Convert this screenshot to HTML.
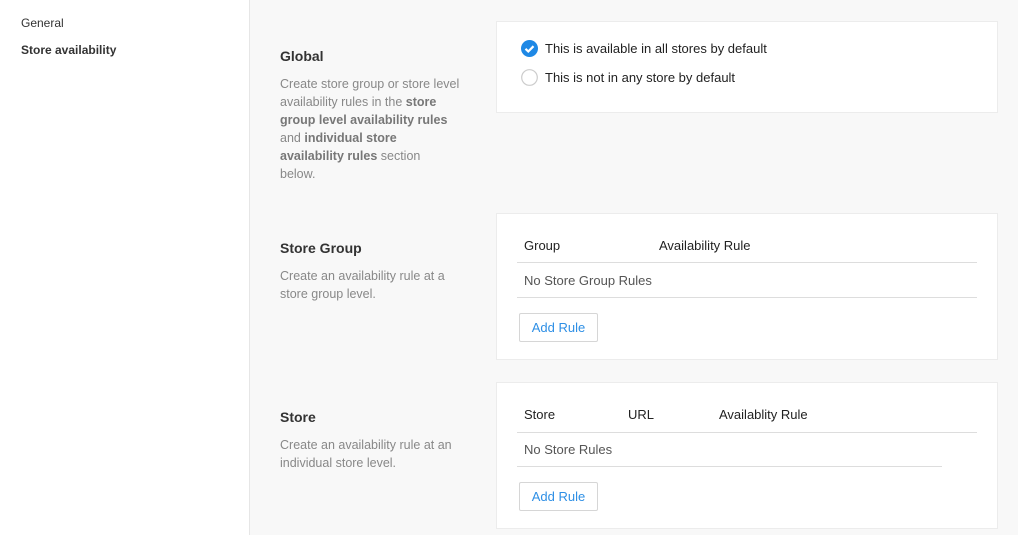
<!DOCTYPE html>
<html><head><meta charset="utf-8"><style>
*{margin:0;padding:0;box-sizing:border-box}
body{width:1018px;height:535px;overflow:hidden;background:#f8f8f8;font-family:"Liberation Sans",sans-serif;position:relative}
.side{position:absolute;left:0;top:0;width:250px;height:535px;background:#fff;border-right:1px solid #e6e6e6}
.side div{position:absolute;left:21px;font-size:12px;color:#333}
.a{position:absolute}
h3{position:absolute;left:280px;font-size:14px;font-weight:bold;color:#333}
.d{position:absolute;left:280px;width:200px;font-size:12.5px;line-height:18px;color:#888;white-space:nowrap}
.d b{color:#777}
.card{position:absolute;left:496px;width:502px;background:#fff;border:1px solid #ececec}
.t{position:absolute;font-size:13px;color:#222}
.g{position:absolute;font-size:13px;color:#555}
.hr{position:absolute;height:1px;background:#ddd}
.btn{position:absolute;left:22px;width:79px;height:29px;border:1px solid #d6d6d6;border-radius:2px;color:#2e8fe5;font-size:13px;text-align:center;line-height:27px}
</style></head><body>
<div class="side"><div style="top:16px">General</div><div style="top:43px;font-weight:bold">Store availability</div></div>

<h3 style="top:48px">Global</h3>
<div class="d" style="top:75px">Create store group or store level<br>availability rules in the <b>store</b><br><b>group level availability rules</b><br>and <b>individual store</b><br><b>availability rules</b> section<br>below.</div>
<div class="card" style="top:21px;height:92px">
<svg class="a" style="left:24px;top:18px" width="17" height="17"><circle cx="8.5" cy="8.5" r="8.5" fill="#1e88e5"/><path d="M4.5 8.8l2.8 2.7 5.2-5.3" stroke="#fff" stroke-width="2.2" fill="none"/></svg>
<div class="t" style="left:48px;top:19px">This is available in all stores by default</div>
<svg class="a" style="left:24px;top:47px" width="17" height="17"><circle cx="8.5" cy="8.5" r="7.8" fill="#fff" stroke="#ccc" stroke-width="1.2"/></svg>
<div class="t" style="left:48px;top:48px">This is not in any store by default</div>
</div>

<h3 style="top:240px">Store Group</h3>
<div class="d" style="top:267px">Create an availability rule at a<br>store group level.</div>
<div class="card" style="top:213px;height:147px">
<div class="t" style="left:27px;top:24px">Group</div>
<div class="t" style="left:162px;top:24px">Availability Rule</div>
<div class="hr" style="left:20px;top:48px;width:460px"></div>
<div class="g" style="left:27px;top:59px">No Store Group Rules</div>
<div class="hr" style="left:20px;top:83px;width:460px"></div>
<div class="btn" style="top:99px">Add Rule</div>
</div>

<h3 style="top:409px">Store</h3>
<div class="d" style="top:436px">Create an availability rule at an<br>individual store level.</div>
<div class="card" style="top:382px;height:147px">
<div class="t" style="left:27px;top:24px">Store</div>
<div class="t" style="left:131px;top:24px">URL</div>
<div class="t" style="left:222px;top:24px">Availablity Rule</div>
<div class="hr" style="left:20px;top:49px;width:460px"></div>
<div class="g" style="left:27px;top:59px">No Store Rules</div>
<div class="hr" style="left:20px;top:83px;width:425px"></div>
<div class="btn" style="top:99px">Add Rule</div>
</div>
</body></html>
